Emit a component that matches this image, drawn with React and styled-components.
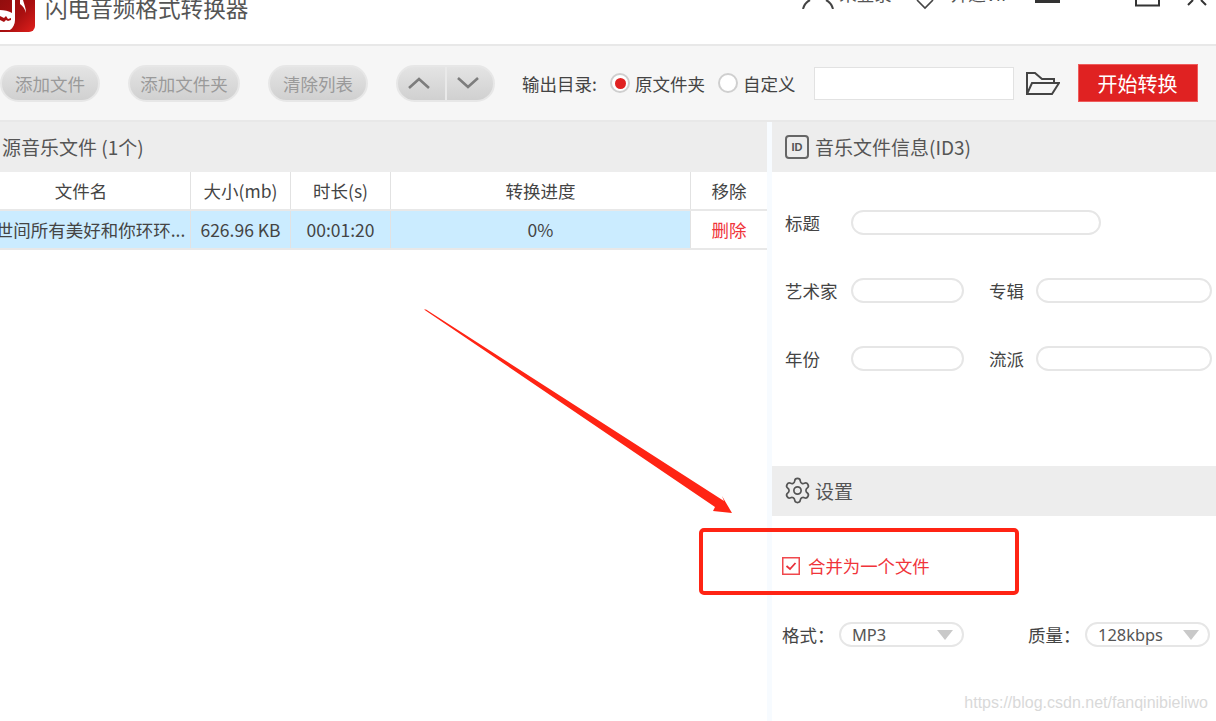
import React from 'react'
import styled, { createGlobalStyle } from 'styled-components'
import { Settings } from 'lucide-react'

const FONT = `"Noto Sans CJK SC", "Open Sans", sans-serif`

const GlobalStyle = createGlobalStyle`
  html, body {
    margin: 0;
    padding: 0;
    background: #fff;
  }
  body {
    font-family: ${FONT};
    color: #444;
  }
`

const Page = styled.div`
  position: relative;
  width: 1216px;
  height: 721px;
  overflow: hidden;
  background: #fff;
`

const TitleBar = styled.header`
  display: flex;
  justify-content: space-between;
  align-items: flex-start;
  height: 44px;
  border-bottom: 2px solid #e8e8e8;
  box-sizing: content-box;
  overflow: hidden;
`

const Brand = styled.div`
  display: flex;
  align-items: flex-start;
  gap: 10px;
`

const Title = styled.h1`
  margin: -8px 0 0;
  font-size: 22.6px;
  line-height: 32px;
  font-weight: 400;
  color: #555;
`

const WindowTools = styled.div`
  display: flex;
  align-items: flex-start;
  padding-right: 9px;
`

const Account = styled.span`
  display: flex;
  align-items: flex-start;
  gap: ${p => p.$gap}px;
  margin-right: ${p => p.$right}px;
  font-size: 17.5px;
  line-height: 24px;
  color: #555;
  & > span {
    margin-top: -18px;
  }
`

const ToolIcon = styled.svg`
  display: block;
  flex: none;
  margin-right: ${p => p.$right || 0}px;
`

const Toolbar = styled.div`
  display: flex;
  align-items: center;
  height: 74px;
  background: #f6f6f6;
  border-bottom: 2px solid #e8e8e8;
`

const PillButton = styled.button`
  height: 37px;
  width: ${p => p.$width}px;
  margin-right: ${p => p.$right}px;
  padding: 0;
  border: 2px solid #e7e7e7;
  border-radius: 19px;
  background: linear-gradient(#e4e4e4, #d0d0d0);
  font-family: ${FONT};
  font-size: 17.5px;
  color: #9a9a9a;
`

const ArrowGroup = styled.div`
  display: flex;
  width: 99px;
  height: 37px;
  margin-right: 27px;
  box-sizing: border-box;
  border: 2px solid #e7e7e7;
  border-radius: 19px;
  overflow: hidden;
  background: linear-gradient(#e4e4e4, #d0d0d0);
`

const ArrowCell = styled.span`
  flex: 1;
  display: flex;
  align-items: center;
  justify-content: center;
  padding-right: 4px;
  & + & {
    border-left: 2px solid #e9e9e9;
  }
`

const OutputLabel = styled.span`
  width: 88px;
  flex: none;
  font-size: 17.5px;
  color: #444;
  white-space: nowrap;
`

const Radio = styled.span`
  flex: none;
  box-sizing: border-box;
  width: 20px;
  height: 20px;
  margin-right: 5px;
  border-radius: 50%;
  border: 2px solid #cfcfcf;
  background: #fff;
  display: flex;
  align-items: center;
  justify-content: center;
  &::after {
    content: '';
    display: ${p => (p.$on ? 'block' : 'none')};
    width: 11px;
    height: 11px;
    border-radius: 50%;
    background: #e02222;
  }
`

const RadioText = styled.span`
  font-size: 17.5px;
  color: #444;
  margin-right: ${p => p.$right}px;
  white-space: nowrap;
`

const PathInput = styled.div`
  box-sizing: border-box;
  width: 200px;
  height: 33px;
  margin-right: 12px;
  background: #fff;
  border: 1px solid #e2e2e2;
`

const StartButton = styled.button`
  width: 120px;
  height: 38px;
  margin-left: 18px;
  padding: 0;
  border: 1px solid #ef5c5c;
  background: #e02222;
  color: #fff;
  font-family: ${FONT};
  font-size: 20px;
`

const Body = styled.div`
  display: flex;
  height: 599px;
`

const LeftPane = styled.section`
  width: 767px;
  flex: none;
`

const Gutter = styled.div`
  width: 5px;
  flex: none;
  background: #f7fbff;
`

const RightPane = styled.section`
  flex: 1;
  min-width: 0;
`

const SectionHead = styled.div`
  display: flex;
  align-items: center;
  gap: 6px;
  box-sizing: border-box;
  height: 50px;
  padding: 0 0 1px ${p => p.$left}px;
  margin-top: ${p => p.$top || 0}px;
  background: #ededed;
  font-size: 19px;
  color: #555;
`

const IdBadge = styled.span`
  box-sizing: border-box;
  width: 24px;
  height: 24px;
  border: 2px solid #666;
  border-radius: 4px;
  display: flex;
  align-items: center;
  justify-content: center;
  font-family: "Liberation Sans", sans-serif;
  font-size: 11px;
  font-weight: 700;
  color: #555;
`

const GearIcon = styled(Settings)`
  flex: none;
  margin: 0 -3px 0 -2px;
`

const TableRow = styled.div`
  display: grid;
  grid-template-columns: 191px 100px 100px 300px 76px;
  box-sizing: border-box;
  height: ${p => p.$height}px;
  background: ${p => p.$bg || '#fff'};
  border-bottom: 2px solid #e8e8e8;
`

const Cell = styled.div`
  display: flex;
  align-items: center;
  justify-content: center;
  box-sizing: border-box;
  padding-right: ${p => p.$pad || 0}px;
  font-size: 17.5px;
  white-space: nowrap;
  color: ${p => p.$color || '#444'};
  border-right: ${p => (p.$last ? 'none' : '1px solid #e2e2e2')};
  background: ${p => p.$bg || 'transparent'};
`

const MetaForm = styled.div`
  display: flex;
  flex-direction: column;
  gap: 43px;
  padding: 38px 0 0 13px;
`

const FormRow = styled.div`
  display: flex;
  align-items: center;
`

const FieldLabel = styled.label`
  width: ${p => p.$width}px;
  flex: none;
  font-size: 17.5px;
  color: #444;
  margin-left: ${p => p.$left || 0}px;
`

const Field = styled.div`
  box-sizing: border-box;
  width: ${p => p.$width}px;
  height: 25px;
  border: 2px solid #e6e6e6;
  border-radius: 13px;
  background: #fff;
`

const MergeRow = styled.div`
  display: flex;
  align-items: center;
  gap: 8px;
  margin: 40px 0 0 10px;
  font-size: 17.4px;
  line-height: 20px;
  color: #f0343a;
`

const CheckBox = styled.svg`
  display: block;
  flex: none;
`

const FormatRow = styled.div`
  display: flex;
  align-items: center;
  margin: 46px 0 0 10px;
`

const FormatLabel = styled.span`
  width: ${p => p.$width}px;
  margin-left: ${p => p.$left || 0}px;
  flex: none;
  font-size: 17.5px;
  color: #444;
  white-space: nowrap;
`

const Select = styled.div`
  box-sizing: border-box;
  width: 125px;
  height: 25px;
  padding: 0 11px;
  display: flex;
  align-items: center;
  justify-content: space-between;
  border: 2px solid #e6e6e6;
  border-radius: 13px;
  font-family: "Noto Sans", sans-serif;
  font-size: 16.4px;
  color: #555;
  &::after {
    content: '';
    margin-right: -2px;
    border-left: 8.5px solid transparent;
    border-right: 8.5px solid transparent;
    border-top: 10px solid #c9c9c9;
  }
`

/* annotations drawn over the screenshot */
const ArrowOverlay = styled.svg`
  position: absolute;
  left: 420px;
  top: 305px;
  pointer-events: none;
`

const Highlight = styled.div`
  position: absolute;
  left: 699px;
  top: 528px;
  width: 320px;
  height: 67px;
  box-sizing: border-box;
  border: 4px solid #ff2414;
  border-radius: 5px;
  pointer-events: none;
`

const Watermark = styled.span`
  position: absolute;
  right: 8px;
  bottom: 9px;
  font-family: "Liberation Sans", sans-serif;
  font-size: 16px;
  color: #d9d9d9;
`

const Logo = () => (
  <svg width="35" height="32" viewBox="0 0 35 32" style={{ display: 'block', flex: 'none' }}>
    <defs>
      <linearGradient id="logoRed" x1="0" y1="0" x2="1" y2="1">
        <stop offset="0" stopColor="#8f0d0d" />
        <stop offset="0.55" stopColor="#a80f10" />
        <stop offset="1" stopColor="#e0201c" />
      </linearGradient>
    </defs>
    <path d="M0 -4H35V26a6 6 0 0 1-6 6H0Z" fill="url(#logoRed)" />
    <path d="M12 0h3v20c0 4-2 8-5 10H0V10c4 0 9 1 12 3Z" fill="#fff" />
    <path d="M0 16l4 2 2-2 2 3 3-1v2l-3 1-2-1-2 2-4-2Z" fill="#a80f10" />
    <path d="M20 0h3c1 4 3 8 3 13-1-4-3-7-6-9Z" fill="#fff" />
  </svg>
)

const Chevron = ({ up }) => (
  <svg width="24" height="14" viewBox="0 0 24 14">
    <polyline
      points={up ? '2,12 12,3 22,12' : '2,2 12,11 22,2'}
      fill="none"
      stroke="#7d7d7d"
      strokeWidth="2.6"
    />
  </svg>
)

const FolderIcon = () => (
  <svg width="34" height="23" viewBox="0 0 34 23" style={{ display: 'block', flex: 'none' }}>
    <path
      d="M1 22V1h8l7 6h12v4M1 22h25l7-11H6Z"
      fill="none"
      stroke="#444"
      strokeWidth="2"
    />
  </svg>
)

const App = () => (
  <Page>
    <GlobalStyle />
    <TitleBar>
      <Brand>
        <Logo />
        <Title>闪电音频格式转换器</Title>
      </Brand>
      <WindowTools>
        <Account $gap={5} $right={23}>
          <ToolIcon width="32" height="9" viewBox="0 0 32 9">
            <path d="M8 0C4 2 2 5 1 9M24 0c4 2 6 5 7 9" fill="none" stroke="#444" strokeWidth="2" />
          </ToolIcon>
          <span>未登录</span>
        </Account>
        <Account $gap={16} $right={23}>
          <ToolIcon width="20" height="10" viewBox="0 0 20 10">
            <path d="M2 0l8 8 8-8" fill="none" stroke="#444" strokeWidth="1.6" />
          </ToolIcon>
          <span>开通VIP</span>
        </Account>
        <ToolIcon width="25" height="3" viewBox="0 0 25 3" $right={75}>
          <rect width="25" height="3" fill="#333" />
        </ToolIcon>
        <ToolIcon width="25" height="7" viewBox="0 0 25 7" $right={27}>
          <path d="M1 0v5.5h23V0" fill="none" stroke="#333" strokeWidth="2" />
        </ToolIcon>
        <ToolIcon width="20" height="6" viewBox="0 0 20 6">
          <path d="M1 5l5-5M19 5l-5-5" fill="none" stroke="#333" strokeWidth="2" />
        </ToolIcon>
      </WindowTools>
    </TitleBar>

    <Toolbar>
      <PillButton $width={100} $right={28}>添加文件</PillButton>
      <PillButton $width={112} $right={28}>添加文件夹</PillButton>
      <PillButton $width={100} $right={28}>清除列表</PillButton>
      <ArrowGroup>
        <ArrowCell><Chevron up /></ArrowCell>
        <ArrowCell><Chevron /></ArrowCell>
      </ArrowGroup>
      <OutputLabel>输出目录:</OutputLabel>
      <Radio $on />
      <RadioText $right={13}>原文件夹</RadioText>
      <Radio />
      <RadioText $right={18}>自定义</RadioText>
      <PathInput />
      <FolderIcon />
      <StartButton>开始转换</StartButton>
    </Toolbar>

    <Body>
      <LeftPane>
        <SectionHead $left={2}>源音乐文件 (1个)</SectionHead>
        <TableRow $height={39}>
          <Cell $pad={28}>文件名</Cell>
          <Cell>大小(mb)</Cell>
          <Cell>时长(s)</Cell>
          <Cell>转换进度</Cell>
          <Cell $last>移除</Cell>
        </TableRow>
        <TableRow $height={39} $bg="#cbecff">
          <Cell $pad={9}>世间所有美好和你环环...</Cell>
          <Cell>626.96 KB</Cell>
          <Cell>00:01:20</Cell>
          <Cell>0%</Cell>
          <Cell $last $bg="#fff" $color="#f0343a">删除</Cell>
        </TableRow>
      </LeftPane>
      <Gutter />
      <RightPane>
        <SectionHead $left={13}>
          <IdBadge>ID</IdBadge>
          音乐文件信息(ID3)
        </SectionHead>
        <MetaForm>
          <FormRow>
            <FieldLabel $width={66}>标题</FieldLabel>
            <Field $width={250} />
          </FormRow>
          <FormRow>
            <FieldLabel $width={66}>艺术家</FieldLabel>
            <Field $width={113} />
            <FieldLabel $width={47} $left={25}>专辑</FieldLabel>
            <Field $width={176} />
          </FormRow>
          <FormRow>
            <FieldLabel $width={66}>年份</FieldLabel>
            <Field $width={113} />
            <FieldLabel $width={47} $left={25}>流派</FieldLabel>
            <Field $width={176} />
          </FormRow>
        </MetaForm>
        <SectionHead $left={13} $top={95}>
          <GearIcon size={29} color="#555" strokeWidth={1.4} />
          设置
        </SectionHead>
        <MergeRow>
          <CheckBox width="18" height="18" viewBox="0 0 18 18">
            <rect x="0.75" y="0.75" width="16.5" height="16.5" fill="none" stroke="#f0484d" strokeWidth="1.5" />
            <polyline points="4.5,9 8,12 13.5,6" fill="none" stroke="#e8303a" strokeWidth="1.8" />
          </CheckBox>
          合并为一个文件
        </MergeRow>
        <FormatRow>
          <FormatLabel $width={57}>格式：</FormatLabel>
          <Select>MP3</Select>
          <FormatLabel $width={57} $left={64}>质量：</FormatLabel>
          <Select>128kbps</Select>
        </FormatRow>
      </RightPane>
    </Body>

    <ArrowOverlay width="320" height="215" viewBox="0 0 320 215">
      <polygon points="4,4.5 6,4.5 304,196 302,191 312,208 293,206 295,202" fill="#ff2414" />
    </ArrowOverlay>
    <Highlight />
    <Watermark>https://blog.csdn.net/fanqinibieliwo</Watermark>
  </Page>
)

export default App
